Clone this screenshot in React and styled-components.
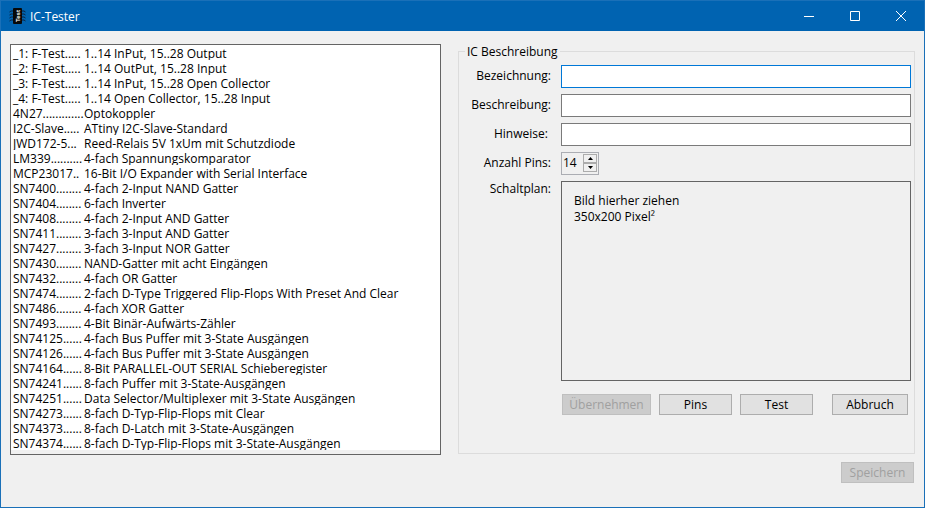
import React, { useState } from "react";
import styled, { createGlobalStyle } from "styled-components";

const GlobalStyle = createGlobalStyle`
  *, *::before, *::after { box-sizing: border-box; }
  body {
    margin: 0;
    background: #f0f0f0;
    color: #000;
    font-family: "Open Sans", "Noto Sans", sans-serif;
    font-size: 12px;
    line-height: 15px;
  }
  button, input { font: inherit; color: inherit; }
`;

const Window = styled.div`
  display: flex;
  flex-direction: column;
  min-height: 100vh;
  border: 1px solid #1a70b8;
  background: #f0f0f0;
`;

const TitleBar = styled.header`
  display: flex;
  align-items: center;
  height: 30px;
  padding-left: 8px;
  background: #0063b1;
  color: #fff;
`;

const ChipIcon = styled.svg`
  width: 17px;
  height: 16px;
  margin-right: 4px;
`;

const Title = styled.h1`
  flex: 1;
  margin: 0;
  font-size: 12px;
  font-weight: 400;
`;

const CaptionButton = styled.button`
  display: grid;
  place-items: center;
  width: 46px;
  height: 30px;
  padding: 0;
  border: 0;
  background: transparent;
  &:hover { background: #1a73ba; }
`;

const Content = styled.main`
  display: grid;
  grid-template-columns: minmax(0, 431fr) minmax(0, 457fr);
  gap: 17px;
  padding: 13px 9px 0;
`;

const ListBox = styled.ul`
  margin: 0;
  padding: 0 0 4px;
  border: 1px solid #646464;
  list-style: none;
`;

const ListItem = styled.li`
  display: grid;
  grid-template-columns: 71px 1fr;
  height: 15px;
  padding-left: 2px;
  background: #fff;
  line-height: 17px;
  white-space: nowrap;
  overflow: hidden;
`;

const Group = styled.fieldset`
  min-width: 0;
  margin: 0 0 1px;
  padding: 6px 3px 38px 0;
  border: 1px solid #dcdcdc;
`;

const Legend = styled.legend`
  height: 15px;
  margin-left: 6px;
  padding: 0 2px;
`;

const Fields = styled.div`
  display: grid;
  grid-template-columns: 92px minmax(0, 1fr);
  gap: 6px 10px;
`;

const Label = styled.label`
  padding-top: ${(p) => (p.$top ? 0 : 3)}px;
  text-align: right;
  white-space: pre;
`;

const TextInput = styled.input`
  width: 100%;
  height: 23px;
  padding: 0 4px;
  border: 1px solid ${(p) => (p.$active ? "#0078d7" : "#7a7a7a")};
  border-radius: 0;
  background: #fff;
  outline: none;
`;

const Spinner = styled.div`
  display: flex;
  width: 38px;
  height: 23px;
  padding: 1px;
  border: 1px solid #abadb3;
`;

const SpinnerInput = styled.input`
  flex: 1;
  min-width: 0;
  height: 16px;
  padding: 0;
  border: 0;
  background: transparent;
  outline: none;
  appearance: textfield;
  &::-webkit-inner-spin-button { appearance: none; margin: 0; }
`;

const SpinnerButtons = styled.div`
  display: flex;
  flex-direction: column;
`;

const StepButton = styled.button`
  display: grid;
  place-items: center;
  width: 14px;
  height: 9px;
  padding: 0;
  border: 1px solid #acacac;
  background: #f0f0f0;
`;

const DropArea = styled.div`
  height: 200px;
  padding: 11px 12px;
  border: 1px solid #646464;
  line-height: 16px;
`;

const Actions = styled.div`
  display: flex;
  gap: 8px;
  margin: 13px 3px 0 103px;
`;

const PushButton = styled.button`
  width: ${(p) => p.$width || 73}px;
  height: 21px;
  padding: 0;
  border: 1px solid #adadad;
  border-radius: 0;
  background: #e1e1e1;
  line-height: 15px;
  white-space: nowrap;
  &:disabled {
    border-color: #bfbfbf;
    background: #cccccc;
    color: #a0a0a0;
  }
`;

const CancelButton = styled(PushButton)`
  margin-left: auto;
`;

const Footer = styled.footer`
  display: flex;
  justify-content: flex-end;
  padding: 7px 10px 24px;
`;

const parts = [
  ["_1: F-Test.....", "1..14 InPut, 15..28 Output"],
  ["_2: F-Test.....", "1..14 OutPut, 15..28 Input"],
  ["_3: F-Test.....", "1..14 InPut, 15..28 Open Collector"],
  ["_4: F-Test.....", "1..14 Open Collector, 15..28 Input"],
  ["4N27.............", "Optokoppler"],
  ["I2C-Slave.....", "ATtiny I2C-Slave-Standard"],
  ["JWD172-5...", "Reed-Relais 5V 1xUm mit Schutzdiode"],
  ["LM339..........", "4-fach Spannungskomparator"],
  ["MCP23017..", "16-Bit I/O Expander with Serial Interface"],
  ["SN7400........", "4-fach 2-Input NAND Gatter"],
  ["SN7404........", "6-fach Inverter"],
  ["SN7408........", "4-fach 2-Input AND Gatter"],
  ["SN7411........", "3-fach 3-Input AND Gatter"],
  ["SN7427........", "3-fach 3-Input NOR Gatter"],
  ["SN7430........", "NAND-Gatter mit acht Eingängen"],
  ["SN7432........", "4-fach OR Gatter"],
  ["SN7474........", "2-fach D-Type Triggered Flip-Flops With Preset And Clear"],
  ["SN7486........", "4-fach XOR Gatter"],
  ["SN7493........", "4-Bit Binär-Aufwärts-Zähler"],
  ["SN74125......", "4-fach Bus Puffer mit 3-State Ausgängen"],
  ["SN74126......", "4-fach Bus Puffer mit 3-State Ausgängen"],
  ["SN74164......", "8-Bit PARALLEL-OUT SERIAL Schieberegister"],
  ["SN74241......", "8-fach Puffer mit 3-State-Ausgängen"],
  ["SN74251......", "Data Selector/Multiplexer mit 3-State Ausgängen"],
  ["SN74273......", "8-fach D-Typ-Flip-Flops mit Clear"],
  ["SN74373......", "8-fach D-Latch mit 3-State-Ausgängen"],
  ["SN74374......", "8-fach D-Typ-Flip-Flops mit 3-State-Ausgängen"],
];

export default function App() {
  const [pins, setPins] = useState(14);

  return (
    <>
      <GlobalStyle />
      <Window>
        <TitleBar>
          <ChipIcon viewBox="0 0 17 16" aria-hidden="true">
            <path
              d="M0.5 4L2 3H15L16.5 4M0.5 7L2 6H15L16.5 7M0.5 10L2 9H15L16.5 10M0.5 13L2 12H15L16.5 13"
              fill="none"
              stroke="#0b2440"
            />
            <rect x="4" y="0" width="9" height="16" rx="1" fill="#080808" />
            <text
              x="8"
              y="10.5"
              transform="rotate(-90 8 8)"
              textAnchor="middle"
              fontSize="6"
              fontWeight="700"
              fontFamily="Liberation Sans, sans-serif"
              fill="#ffffff"
            >
              Test
            </text>
          </ChipIcon>
          <Title>IC-Tester</Title>
          <CaptionButton aria-label="Minimieren">
            <svg width="10" height="10" stroke="#fff"><path d="M0 5.5H10" /></svg>
          </CaptionButton>
          <CaptionButton aria-label="Maximieren">
            <svg width="10" height="10" stroke="#fff" fill="none"><path d="M0.5 0.5H9.5V9.5H0.5Z" /></svg>
          </CaptionButton>
          <CaptionButton aria-label="Schließen">
            <svg width="10" height="10" stroke="#fff"><path d="M0 0L10 10M10 0L0 10" /></svg>
          </CaptionButton>
        </TitleBar>

        <Content>
          <ListBox role="listbox" aria-label="IC-Liste" tabIndex={0}>
            {parts.map(([name, text]) => (
              <ListItem key={name} role="option" aria-selected={false}>
                <span>{name}</span>
                <span>{text}</span>
              </ListItem>
            ))}
          </ListBox>

          <Group>
            <Legend>IC Beschreibung</Legend>
            <Fields>
              <Label htmlFor="bezeichnung">Bezeichnung:</Label>
              <TextInput id="bezeichnung" type="text" $active />
              <Label htmlFor="beschreibung">Beschreibung:</Label>
              <TextInput id="beschreibung" type="text" />
              <Label htmlFor="hinweise">{"Hinweise: "}</Label>
              <TextInput id="hinweise" type="text" />
              <Label htmlFor="pins">Anzahl Pins:</Label>
              <Spinner>
                <SpinnerInput
                  id="pins"
                  type="number"
                  value={pins}
                  onChange={(e) => setPins(Number(e.target.value))}
                />
                <SpinnerButtons>
                  <StepButton aria-label="Mehr" onClick={() => setPins(pins + 1)}>
                    <svg width="5" height="3"><path d="M0 3L2.5 0L5 3Z" /></svg>
                  </StepButton>
                  <StepButton aria-label="Weniger" onClick={() => setPins(pins - 1)}>
                    <svg width="5" height="3"><path d="M0 0L2.5 3L5 0Z" /></svg>
                  </StepButton>
                </SpinnerButtons>
              </Spinner>
              <Label as="span" $top>Schaltplan:</Label>
              <DropArea>
                Bild hierher ziehen
                <br />
                350x200 Pixel²
              </DropArea>
            </Fields>
            <Actions>
              <PushButton $width={89} disabled>Übernehmen</PushButton>
              <PushButton>Pins</PushButton>
              <PushButton>Test</PushButton>
              <CancelButton $width={76}>Abbruch</CancelButton>
            </Actions>
          </Group>
        </Content>

        <Footer>
          <PushButton disabled>Speichern</PushButton>
        </Footer>
      </Window>
    </>
  );
}
